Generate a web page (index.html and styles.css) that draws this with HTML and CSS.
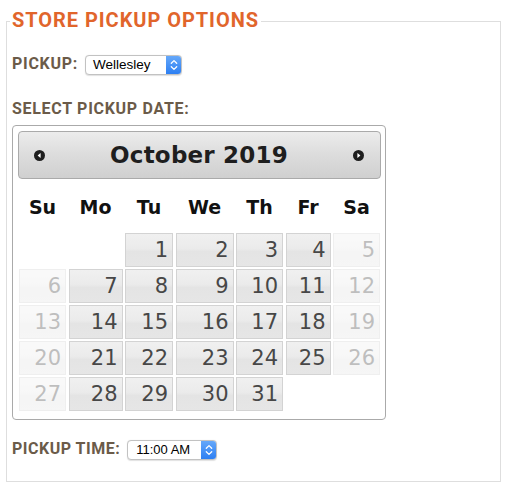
FILE: index.html
```html
<!DOCTYPE html>
<html lang="en">
<head>
<meta charset="utf-8">
<title>Store Pickup Options</title>
<link rel="stylesheet" href="styles.css">
</head>
<body>
<fieldset class="pickup">
  <legend class="pickup-legend">Store Pickup Options</legend>

  <div class="field-row row-location">
    <span class="field-label">Pickup:</span>
    <div class="select select-location">
      <span class="select-value">Wellesley</span>
      <span class="select-arrows">
        <svg width="16" height="20" viewBox="0 0 16 20"><path d="M5.3 8.3 L8 5.6 L10.7 8.3 M5.3 11.7 L8 14.4 L10.7 11.7" fill="none" stroke="#fff" stroke-width="1.3" stroke-linecap="round" stroke-linejoin="round"/></svg>
      </span>
    </div>
  </div>

  <div class="field-label date-label">Select Pickup Date:</div>

  <div class="datepicker">
    <div class="dp-header">
      <svg class="dp-nav" width="11" height="11" viewBox="0 0 11 11"><circle cx="5.5" cy="5.5" r="5.5" fill="#1e1e1e"/><polygon points="6.6,3 3.6,5.5 6.6,8" fill="#fff"/></svg>
      <span class="dp-title">October 2019</span>
      <svg class="dp-nav" width="11" height="11" viewBox="0 0 11 11"><circle cx="5.5" cy="5.5" r="5.5" fill="#1e1e1e"/><polygon points="4.4,3 7.4,5.5 4.4,8" fill="#fff"/></svg>
    </div>
    <div class="dp-grid">
      <div class="dp-dow">Su</div>
      <div class="dp-dow">Mo</div>
      <div class="dp-dow">Tu</div>
      <div class="dp-dow">We</div>
      <div class="dp-dow">Th</div>
      <div class="dp-dow">Fr</div>
      <div class="dp-dow">Sa</div>

      <div class="dp-empty"></div>
      <div class="dp-empty"></div>
      <div class="dp-day">1</div>
      <div class="dp-day">2</div>
      <div class="dp-day">3</div>
      <div class="dp-day">4</div>
      <div class="dp-day dp-off">5</div>

      <div class="dp-day dp-off">6</div>
      <div class="dp-day">7</div>
      <div class="dp-day">8</div>
      <div class="dp-day">9</div>
      <div class="dp-day">10</div>
      <div class="dp-day">11</div>
      <div class="dp-day dp-off">12</div>

      <div class="dp-day dp-off">13</div>
      <div class="dp-day">14</div>
      <div class="dp-day">15</div>
      <div class="dp-day">16</div>
      <div class="dp-day">17</div>
      <div class="dp-day">18</div>
      <div class="dp-day dp-off">19</div>

      <div class="dp-day dp-off">20</div>
      <div class="dp-day">21</div>
      <div class="dp-day">22</div>
      <div class="dp-day">23</div>
      <div class="dp-day">24</div>
      <div class="dp-day">25</div>
      <div class="dp-day dp-off">26</div>

      <div class="dp-day dp-off">27</div>
      <div class="dp-day">28</div>
      <div class="dp-day">29</div>
      <div class="dp-day">30</div>
      <div class="dp-day">31</div>
    </div>
  </div>

  <div class="field-row row-time">
    <span class="field-label">Pickup Time:</span>
    <div class="select select-time">
      <span class="select-value">11:00 AM</span>
      <span class="select-arrows">
        <svg width="16" height="20" viewBox="0 0 16 20"><path d="M5.3 8.3 L8 5.6 L10.7 8.3 M5.3 11.7 L8 14.4 L10.7 11.7" fill="none" stroke="#fff" stroke-width="1.3" stroke-linecap="round" stroke-linejoin="round"/></svg>
      </span>
    </div>
  </div>
</fieldset>
</body>
</html>
```

FILE: styles.css
```css
html, body {
  margin: 0;
  padding: 0;
  background: #fff;
}

body {
  padding-top: 10px;
  font-family: Roboto, "Liberation Sans", sans-serif;
}

.pickup {
  margin: 0 18px 0 6px;
  padding: 0 5px 21px 5px;
  border: 1px solid #dedede;
  min-width: 0;
}

.pickup-legend {
  margin-left: -2px;
  padding: 0 2px 3px 2px;
  font-family: Roboto, "Liberation Sans", sans-serif;
  font-weight: 700;
  font-size: 20px;
  line-height: 20px;
  letter-spacing: 0.95px;
  text-transform: uppercase;
  color: #e1652b;
}

.field-label {
  font-family: Roboto, "Liberation Sans", sans-serif;
  font-weight: 700;
  font-size: 16px;
  line-height: 20px;
  letter-spacing: 0.7px;
  text-transform: uppercase;
  color: #6b5b49;
}

.field-row {
  display: flex;
  align-items: center;
  height: 20px;
}

.field-row .field-label {
  padding-bottom: 3px;
}

.row-location {
  margin-top: 22px;
  gap: 7px;
}

.row-time {
  margin-top: 20px;
  gap: 7px;
}

.row-time .field-label {
  letter-spacing: 0.5px;
}

.date-label {
  margin: 24px 0 6px;
}

/* mac-style select */
.select {
  display: flex;
  align-items: stretch;
  height: 20px;
  box-sizing: border-box;
  border: 1px solid #c2c2c2;
  border-radius: 4px;
  background: #fff;
  box-shadow: 0 0.5px 1px rgba(0, 0, 0, 0.12);
  overflow: hidden;
}

.select-location { width: 97px; }
.select-time { width: 90px; }

.select-value {
  flex: 1;
  padding-left: 7px;
  font-family: "Liberation Sans", Arial, sans-serif;
  font-size: 13.5px;
  line-height: 18px;
  color: #000;
  white-space: nowrap;
}

.select-time .select-value {
  padding-left: 8px;
  font-size: 13px;
}

.select-arrows {
  display: flex;
  align-items: center;
  justify-content: center;
  width: 16px;
  margin: -1px -1px -1px 0;
  background: linear-gradient(#68aafa, #2a7df2);
}

/* datepicker */
.datepicker {
  width: 374px;
  box-sizing: border-box;
  padding: 5px 4px 8px 5px;
  border: 1px solid #aaaaaa;
  border-radius: 4px;
  background: #fff;
}

.dp-header {
  display: flex;
  align-items: center;
  justify-content: space-between;
  height: 48px;
  box-sizing: border-box;
  padding: 0 16px 0 15px;
  border: 1px solid #aaaaaa;
  border-radius: 4px;
  background: linear-gradient(#ececec 0%, #dcdcdc 50%, #d0d0d0 100%);
}

.dp-nav {
  display: block;
  flex: none;
}

.dp-title {
  font-family: "DejaVu Sans", Verdana, sans-serif;
  font-weight: 700;
  font-size: 23px;
  line-height: 28px;
  letter-spacing: 0.2px;
  color: #1e1e1e;
}

.dp-grid {
  display: grid;
  grid-template-columns: 47px 54px 48px 58px 47px 45px 47px;
  grid-template-rows: 46px;
  grid-auto-rows: 34px;
  column-gap: 2.5px;
  row-gap: 2px;
  margin: 6px 1px 0;
}

.dp-dow {
  font-family: "DejaVu Sans", Verdana, sans-serif;
  font-weight: 700;
  font-size: 19px;
  line-height: 44px;
  text-align: center;
  color: #111;
}

.dp-day {
  box-sizing: border-box;
  height: 34px;
  padding: 1px 4px 0 0;
  border: 1px solid #d3d3d3;
  background: linear-gradient(#f0f0f0 0%, #ebebeb 45%, #e4e4e4 55%, #e6e6e6 100%);
  font-family: "DejaVu Sans", Verdana, sans-serif;
  font-size: 21px;
  line-height: 31px;
  text-align: right;
  color: #474747;
}

.dp-off {
  opacity: 0.35;
}
```
